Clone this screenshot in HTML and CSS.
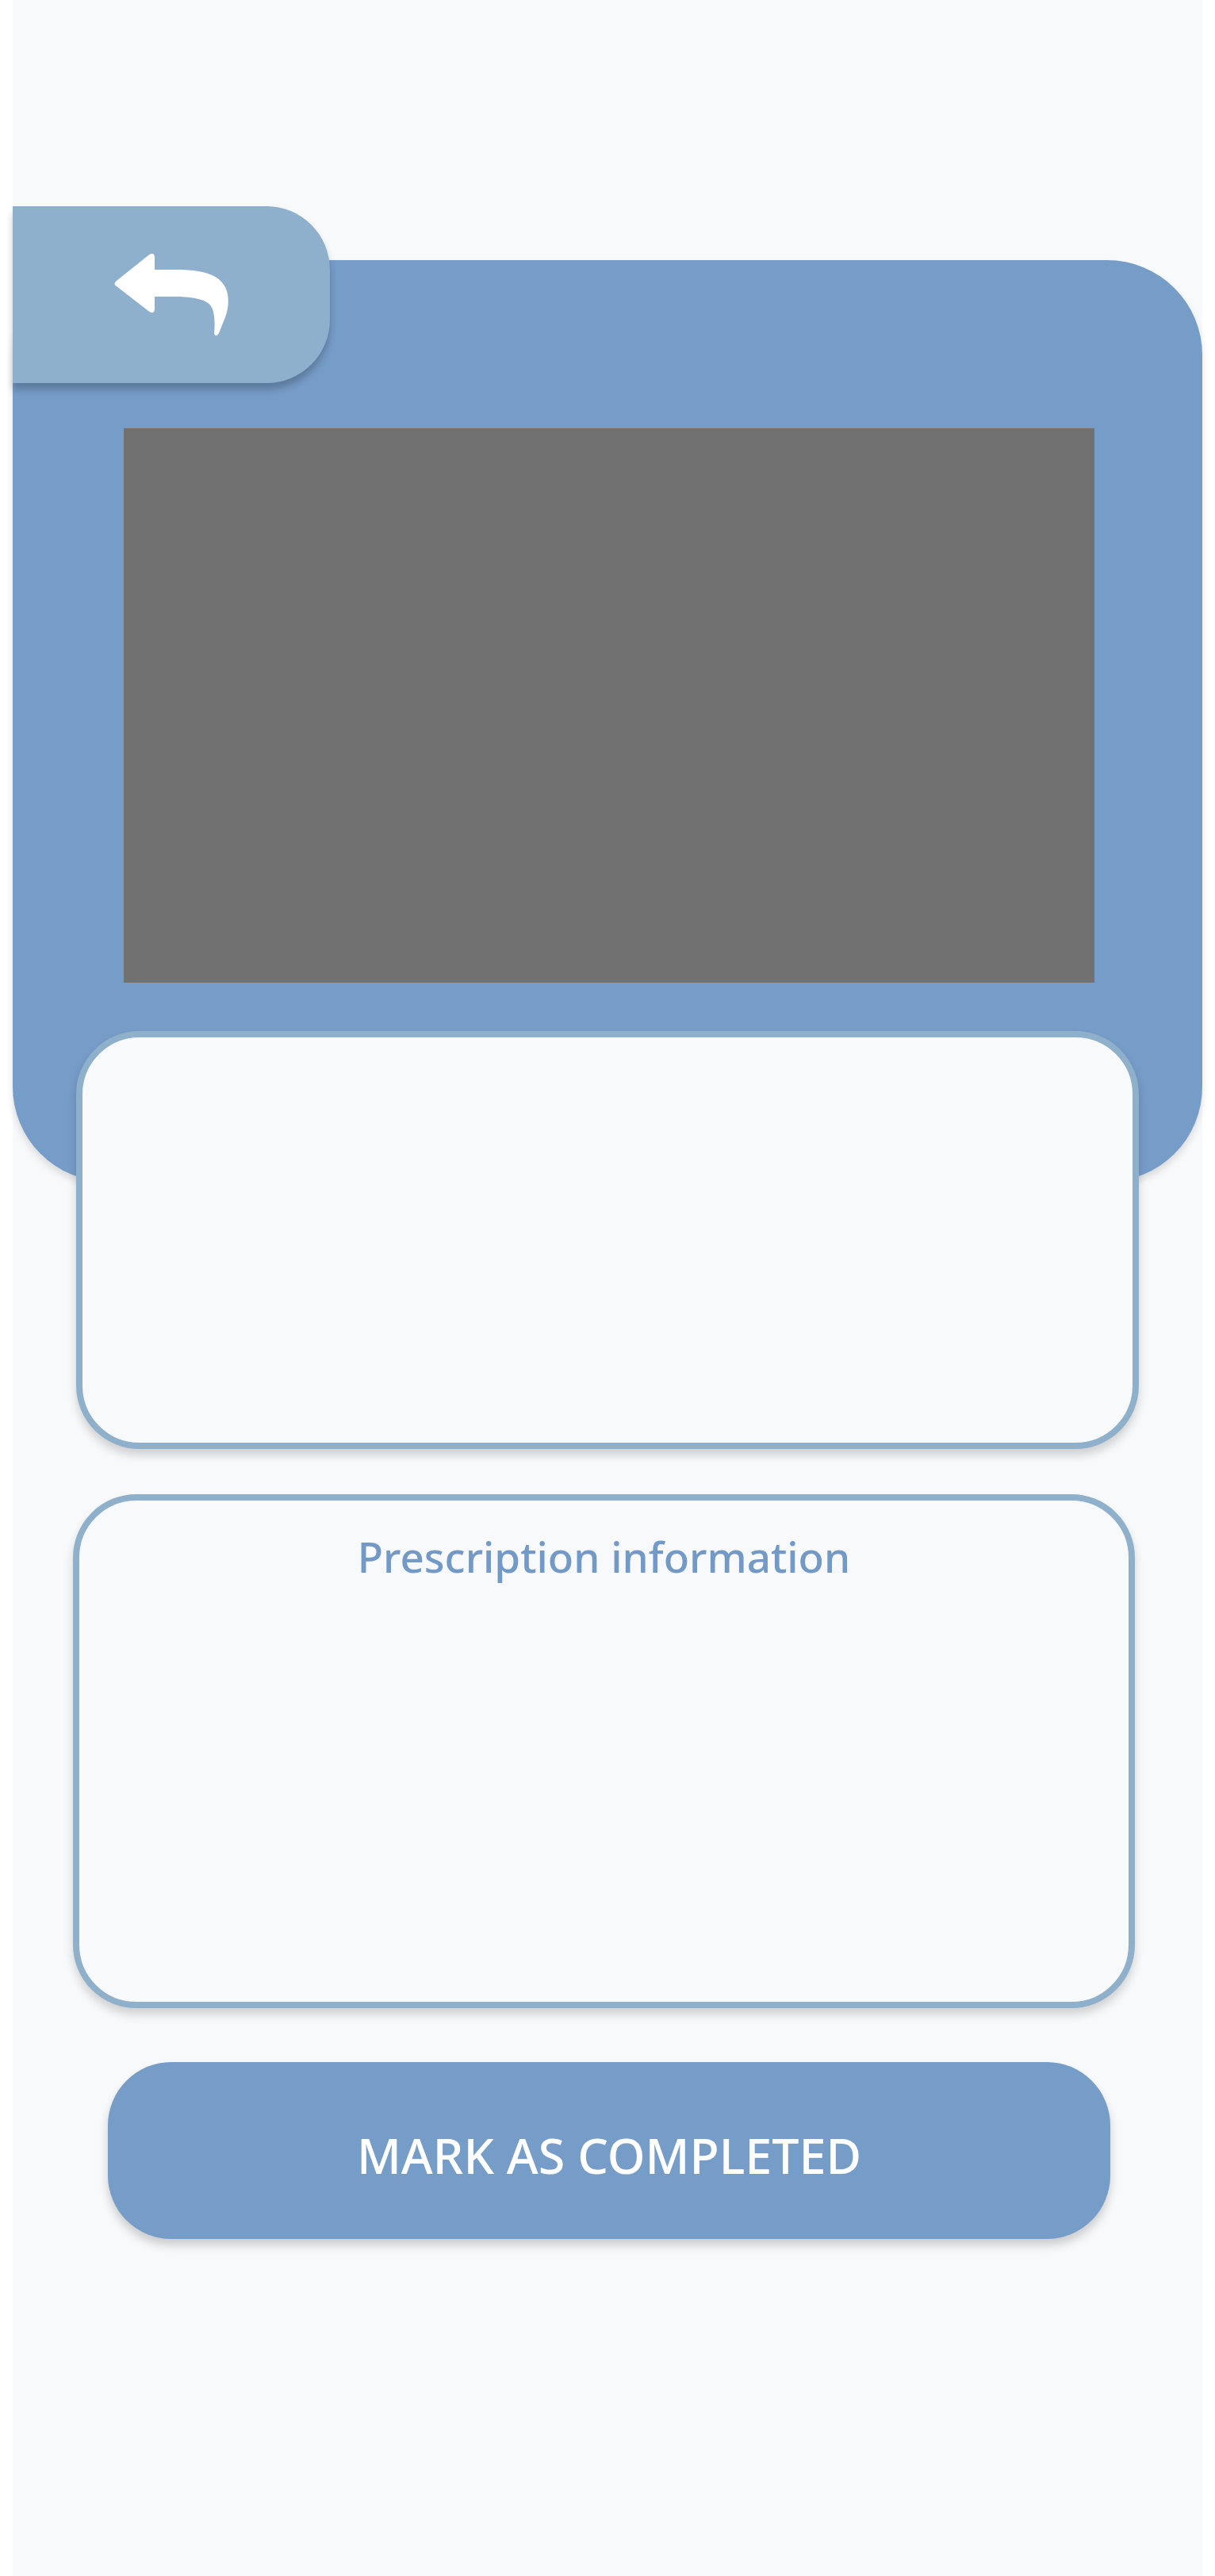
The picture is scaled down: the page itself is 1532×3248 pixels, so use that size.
FILE: index.html
```html
<!DOCTYPE html>
<html lang="en">
<head>
    <meta charset="UTF-8">
    <meta name="viewport" content="width=device-width, initial-scale=1.0">
    <title>Prescription</title>
    <link rel="stylesheet" href="styles.css">
</head>
<body>
    <div class="app">
        <a class="back-btn" href="#">
            <svg width="144" height="104" viewBox="144 320 144 104">
                <path fill="#ffffff" d="M147 354 L187 322 Q195 316 195 326 L195 340 L228 340 C258 341 276 347 284 362 C290 374 288 390 284 400 L276 420 Q273 426 270 421 C271 410 271 398 268 390 C264 380 255 376 228 374 L195 374 L195 388 Q195 398 187 392 L147 361 Q142 358 147 354 Z"/>
            </svg>
        </a>

        <div class="header">
            <div class="photo"></div>
        </div>

        <div class="card card-top"></div>

        <div class="card card-info">
            <h2 class="card-title">Prescription information</h2>
        </div>

        <button class="complete-btn">MARK AS COMPLETED</button>
    </div>
</body>
</html>
```

FILE: styles.css
```css
body {
    margin: 0;
    padding: 0;
    background: #ffffff;
    font-family: "Noto Sans", "Open Sans", Arial, sans-serif;
}
.app {
    position: relative;
    margin: 0 16px;
    min-height: 3248px;
    background: #f8f9fb;
    padding-top: 328px;
    box-sizing: border-box;
    display: flex;
    flex-direction: column;
}
.back-btn {
    position: absolute;
    top: 260px;
    left: 0;
    width: 400px;
    height: 223px;
    background: #8fb0cc;
    border-radius: 0 80px 80px 0;
    box-shadow: 0 8px 10px rgba(0, 0, 0, 0.22);
    display: flex;
    align-items: center;
    justify-content: center;
    z-index: 3;
}
.header {
    height: 1162px;
    background: #769cc8;
    border-radius: 120px;
    box-shadow: 0 6px 10px rgba(0, 0, 0, 0.12);
    padding: 212px 136px 0 140px;
    box-sizing: border-box;
}
.photo {
    height: 699px;
    background: #717171;
}
.card {
    position: relative;
    z-index: 2;
    background: #f8f9fb;
    border: 8px solid #8fb0cb;
    border-radius: 80px;
    box-sizing: border-box;
    box-shadow: 0 8px 12px rgba(0, 0, 0, 0.16);
}
.card-top {
    margin: -190px 0 0 80px;
    width: 1340px;
    height: 527px;
}
.card-info {
    margin: 57px 0 0 76px;
    width: 1339px;
    height: 648px;
    padding-top: 34px;
    text-align: center;
}
.card-title {
    margin: 0;
    font-size: 53px;
    font-weight: 500;
    color: #7399c6;
}
.complete-btn {
    margin: 68px 0 0 120px;
    width: 1264px;
    height: 223px;
    padding-top: 12px;
    background: #769cc8;
    color: #ffffff;
    border: none;
    border-radius: 80px;
    font-family: "Noto Sans", "Open Sans", Arial, sans-serif;
    font-size: 61px;
    font-weight: 500;
    box-shadow: 0 8px 12px rgba(0, 0, 0, 0.18);
    cursor: pointer;
}
```
